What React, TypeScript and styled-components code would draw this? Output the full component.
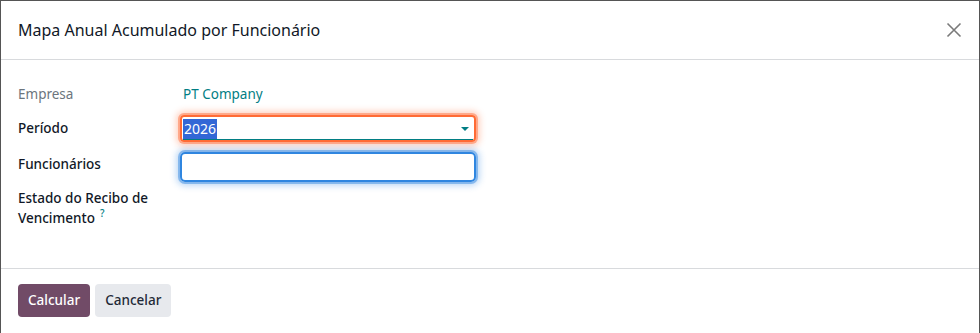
import styled, { createGlobalStyle } from 'styled-components';

const GlobalStyle = createGlobalStyle`
  html, body {
    margin: 0;
    padding: 0;
    background: #ffffff;
  }
  body {
    font-family: "Noto Sans", "Open Sans", sans-serif;
    color: #212529;
  }
`;

const App = () => {
  return (
    <>
      <GlobalStyle />
      <Modal>
        <Header>
          <Title>Mapa Anual Acumulado por Funcionário</Title>
          <Close aria-label="Fechar">
            <svg width="16" height="16" viewBox="0 0 16 16">
              <path d="M1.5 1.5 L14.5 14.5 M14.5 1.5 L1.5 14.5" stroke="#7a7a7a" strokeWidth="1.6" fill="none" />
            </svg>
          </Close>
        </Header>

        <Body>
          <Row>
            <Label muted>Empresa</Label>
            <Value>
              <Link>PT Company</Link>
            </Value>
          </Row>
          <Row>
            <Label>Período</Label>
            <Value>
              <SelectBox>
                <Selected>2026</Selected>
                <Caret />
              </SelectBox>
            </Value>
          </Row>
          <Row>
            <Label>Funcionários</Label>
            <Value>
              <InputBox />
            </Value>
          </Row>
          <Row>
            <Label>
              Estado do Recibo de Vencimento<Help>?</Help>
            </Label>
            <Value />
          </Row>
        </Body>

        <Footer>
          <Button primary>Calcular</Button>
          <Button>Cancelar</Button>
        </Footer>
      </Modal>
    </>
  );
};

export default App;

const Modal = styled.div`
  width: 980px;
  height: 333px;
  box-sizing: border-box;
  border: 1px solid #555;
  border-bottom: none;
  background: #fff;
  display: flex;
  flex-direction: column;
`;

const Header = styled.div`
  height: 58px;
  flex-shrink: 0;
  display: flex;
  align-items: center;
  justify-content: space-between;
  padding: 0 17px;
  border-bottom: 1px solid #d8dadd;
`;

const Title = styled.h4`
  margin: 0;
  font-size: 16px;
  font-weight: 400;
  color: #111827;
`;

const Close = styled.button`
  border: none;
  background: none;
  padding: 0;
  display: flex;
  align-items: center;
  cursor: pointer;
`;

const Body = styled.div`
  flex: 1;
  padding: 20px 17px 0 17px;
  display: flex;
  flex-direction: column;
`;

const Row = styled.div`
  display: grid;
  grid-template-columns: 162px 296px;
  align-items: start;
  min-height: 34px;
`;

const Label = styled.div<{ muted?: boolean }>`
  font-size: 13.5px;
  line-height: 20px;
  padding-top: 4px;
  width: 140px;
  font-weight: ${p => (p.muted ? 400 : 500)};
  color: ${p => (p.muted ? '#6c757d' : '#111827')};
`;

const Help = styled.span`
  color: #017e84;
  font-size: 10px;
  line-height: 0;
  vertical-align: 6px;
  margin-left: 5px;
`;

const Value = styled.div`
  font-size: 13.5px;
  line-height: 20px;
`;

const Link = styled.div`
  color: #017e84;
  padding-top: 4px;
  padding-left: 3px;
`;

const SelectBox = styled.div`
  height: 27px;
  box-sizing: border-box;
  margin: 1px 0 8px;
  border: 2px solid #ff6b35;
  border-radius: 4px;
  box-shadow: 0 0 0 2px rgba(255, 107, 53, 0.45), 0 0 6px 4px rgba(255, 107, 53, 0.3);
  display: flex;
  align-items: center;
  justify-content: space-between;
  padding: 0 5px 0 1px;
  position: relative;
  &::after {
    content: '';
    position: absolute;
    left: 1px;
    right: 1px;
    bottom: 0;
    height: 1px;
    background: #017e84;
  }
`;

const Selected = styled.span`
  background: #3367d6;
  color: #fff;
  font-size: 14px;
  line-height: 20px;
  padding: 0 1px;
`;

const Caret = styled.span`
  width: 0;
  height: 0;
  border-left: 4px solid transparent;
  border-right: 4px solid transparent;
  border-top: 4px solid #017e84;
`;

const InputBox = styled.div`
  height: 30px;
  box-sizing: border-box;
  margin-top: 2px;
  border: 2.5px solid #2f86e0;
  border-radius: 5px;
  box-shadow: 0 0 0 2px rgba(47, 134, 224, 0.45), 0 0 6px 4px rgba(47, 134, 224, 0.3);
`;

const Footer = styled.div`
  height: 65px;
  flex-shrink: 0;
  box-sizing: border-box;
  border-top: 1px solid #d8dadd;
  display: flex;
  align-items: center;
  gap: 5px;
  padding: 0 17px 2px;
`;

const Button = styled.button<{ primary?: boolean }>`
  height: 33px;
  border: none;
  border-radius: 4px;
  padding: 0 10px;
  font-family: "Noto Sans", "Open Sans", sans-serif;
  font-size: 13.5px;
  font-weight: 500;
  background: ${p => (p.primary ? '#714b67' : '#e7e9ed')};
  color: ${p => (p.primary ? '#ffffff' : '#1f2937')};
  cursor: pointer;
`;
